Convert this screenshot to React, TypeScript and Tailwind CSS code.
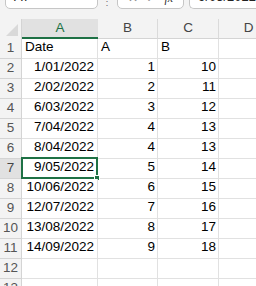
import { useState } from "react";

const rows: [string, string, string][] = [
  ["Date", "A", "B"],
  ["1/01/2022", "1", "10"],
  ["2/02/2022", "2", "11"],
  ["6/03/2022", "3", "12"],
  ["7/04/2022", "4", "13"],
  ["8/04/2022", "4", "13"],
  ["9/05/2022", "5", "14"],
  ["10/06/2022", "6", "15"],
  ["12/07/2022", "7", "16"],
  ["13/08/2022", "8", "17"],
  ["14/09/2022", "9", "18"],
  ["", "", ""],
  ["", "", ""],
];

const cols = ["A", "B", "C", "D"];

export default function App() {
  const [active] = useState({ row: 7, col: 0 });

  return (
    <div className="w-[256px] h-[286px] overflow-hidden bg-[#f3f3f3] font-['Liberation_Sans',Arial,sans-serif] text-[13.5px] text-black">
      {/* Formula bar */}
      <div className="h-[19px] flex items-start overflow-visible">
        <div className="ml-[5px] -mt-[15px] w-[101px] h-[24px] bg-white border border-[#c6c6c6] rounded-[5px] px-[8px] pt-[1px] text-[13px] text-[#222]">
          A7
        </div>
        <div className="w-[22px] flex justify-center -mt-[3px] text-[#777] text-[10px] leading-none">⋮</div>
        <div className="-mt-[15px] w-[72px] h-[24px] bg-white border border-[#c6c6c6] rounded-[5px] flex items-center justify-between px-[10px] pt-[2px] text-[#888] text-[12px]">
          <span>✕</span>
          <span>✓</span>
          <span className="italic text-[#333] font-['Liberation_Serif',serif]">fx</span>
        </div>
        <div className="ml-[5px] -mt-[15px] flex-1 h-[24px] bg-white border border-r-0 border-[#c6c6c6] rounded-l-[5px] pl-[8px] pt-[1px] text-[13px] text-[#222] whitespace-nowrap">
          9/05/2022
        </div>
      </div>

      {/* Sheet */}
      <div className="grid grid-cols-[22px_76px_60px_61px_60px] w-[279px]">
        {/* Column headers */}
        <div className="h-[20px] border-r border-[#d4d4d4] flex items-end justify-end pr-[3px] pb-[3px]">
          <svg width="12" height="12" viewBox="0 0 12 12">
            <polygon points="12,0 12,12 0,12" fill="#d9d9d9" />
          </svg>
        </div>
        {cols.map((c, i) => (
          <div
            key={c}
            className={`h-[20px] flex items-center justify-center ${
              i === active.col
                ? "bg-[#e1e1e1] text-[#1e7145] border-b-2 border-[#1e7145]"
                : "text-[#444] border-r border-[#dadada] border-b border-b-[#d4d4d4]"
            }`}
          >
            {c}
          </div>
        ))}

        {/* Rows */}
        {rows.map((r, idx) => {
          const n = idx + 1;
          const sel = n === active.row;
          return [
            <div
              key={`h${n}`}
              className={`h-[20px] flex items-center justify-center border-r border-b border-[#d4d4d4] ${
                sel ? "bg-[#e1e1e1] text-[#444]" : "text-[#555]"
              }`}
            >
              {n}
            </div>,
            <div key={`a${n}`} className="relative h-[20px] bg-white border-r border-b border-[#e1e1e1] flex items-end pb-[1px] px-[3px]">
              <span className={n === 1 ? "" : "ml-auto"}>{r[0]}</span>
              {sel && (
                <>
                  <div className="absolute -left-[1px] -top-[2px] -right-[1px] -bottom-[1px] border-2 border-[#1e7145]" />
                  <div className="absolute -right-[3px] -bottom-[3px] w-[6px] h-[6px] bg-[#1e7145] border border-white" />
                </>
              )}
            </div>,
            <div key={`b${n}`} className="h-[20px] bg-white border-r border-b border-[#e1e1e1] flex items-end pb-[1px] px-[2px]">
              <span className={n === 1 ? "pl-[1px]" : "ml-auto"}>{r[1]}</span>
            </div>,
            <div key={`c${n}`} className="h-[20px] bg-white border-r border-b border-[#e1e1e1] flex items-end pb-[1px] px-[2px]">
              <span className={n === 1 ? "pl-[1px]" : "ml-auto"}>{r[2]}</span>
            </div>,
            <div key={`d${n}`} className="h-[20px] bg-white border-r border-b border-[#e1e1e1]" />,
          ];
        })}
      </div>
    </div>
  );
}
